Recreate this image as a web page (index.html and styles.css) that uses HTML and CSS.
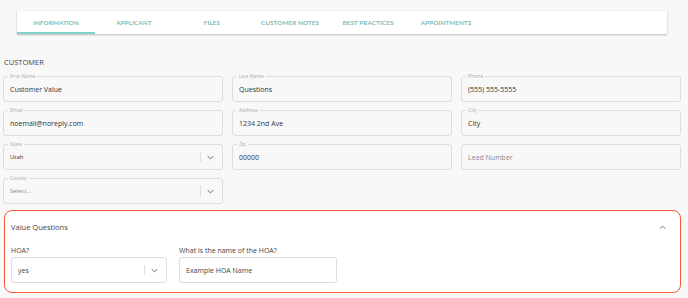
FILE: index.html
```html
<!DOCTYPE html>
<html lang="en">
<head>
    <meta charset="UTF-8">
    <meta name="viewport" content="width=device-width, initial-scale=1.0">
    <title>Customer</title>
    <link rel="stylesheet" href="styles.css">
</head>
<body>
    <nav class="tabs">
        <div class="tab active">Information</div>
        <div class="tab">Applicant</div>
        <div class="tab">Files</div>
        <div class="tab">Customer Notes</div>
        <div class="tab">Best Practices</div>
        <div class="tab">Appointments</div>
    </nav>

    <div class="content">
        <h3 class="section-title">CUSTOMER</h3>
        <div class="field-grid">
            <div class="field">
                <span class="field-label">First Name</span>
                <span class="field-value">Customer Value</span>
            </div>
            <div class="field">
                <span class="field-label">Last Name</span>
                <span class="field-value">Questions</span>
            </div>
            <div class="field">
                <span class="field-label">Phone</span>
                <span class="field-value">(555) 555-5555</span>
            </div>
            <div class="field">
                <span class="field-label">Email</span>
                <span class="field-value">noemail@noreply.com</span>
            </div>
            <div class="field">
                <span class="field-label">Address</span>
                <span class="field-value">1234 2nd Ave</span>
            </div>
            <div class="field">
                <span class="field-label">City</span>
                <span class="field-value">City</span>
            </div>
            <div class="field select">
                <span class="field-label">State</span>
                <span class="field-value small">Utah</span>
                <span class="sep"></span>
                <svg class="chevron" viewBox="0 0 10 6" width="7" height="5"><path d="M1 1l4 4 4-4" fill="none" stroke="#666" stroke-width="1.4"/></svg>
            </div>
            <div class="field">
                <span class="field-label">Zip</span>
                <span class="field-value">00000</span>
            </div>
            <div class="field">
                <span class="field-value placeholder">Lead Number</span>
            </div>
            <div class="field select">
                <span class="field-label">County</span>
                <span class="field-value small placeholder">Select...</span>
                <span class="sep"></span>
                <svg class="chevron" viewBox="0 0 10 6" width="7" height="5"><path d="M1 1l4 4 4-4" fill="none" stroke="#666" stroke-width="1.4"/></svg>
            </div>
        </div>

        <div class="panel">
            <div class="panel-header">
                <span>Value Questions</span>
                <svg class="chevron" viewBox="0 0 10 6" width="7" height="5"><path d="M1 5l4-4 4 4" fill="none" stroke="#777" stroke-width="1.4"/></svg>
            </div>
            <div class="panel-body">
                <div class="question">
                    <label>HOA?</label>
                    <div class="box select">
                        <span class="box-value small">yes</span>
                        <span class="sep"></span>
                        <svg class="chevron" viewBox="0 0 10 6" width="7" height="5"><path d="M1 1l4 4 4-4" fill="none" stroke="#666" stroke-width="1.4"/></svg>
                    </div>
                </div>
                <div class="question">
                    <label>What is the name of the HOA?</label>
                    <div class="box wide">
                        <span class="box-value">Example HOA Name</span>
                    </div>
                </div>
            </div>
        </div>
    </div>
</body>
</html>
```

FILE: styles.css
```css
body {
    margin: 0;
    padding: 0;
    background-color: #f8f8f8;
    font-family: "Open Sans", Arial, sans-serif;
    color: #333;
}

.tabs {
    display: flex;
    margin: 11px 21px 0 17px;
    height: 23px;
    background-color: #fff;
    box-shadow: 0px 1px 2px 0px rgba(0, 0, 0, 0.25);
}

.tab {
    width: 78px;
    box-sizing: border-box;
    text-align: center;
    line-height: 23px;
    font-family: Lato, sans-serif;
    font-weight: 700;
    font-size: 6.3px;
    letter-spacing: 0.1px;
    text-transform: uppercase;
    color: #80bcb5;
}

.tab.active {
    border-bottom: 2px solid #7fd0c6;
}

.content {
    padding: 0 7px 0 3px;
}

.section-title {
    margin: 23px 0 9px 1px;
    font-size: 7.5px;
    line-height: 10px;
    font-weight: 400;
    color: #444;
}

.field-grid {
    display: grid;
    grid-template-columns: repeat(3, 1fr);
    column-gap: 9px;
    row-gap: 8px;
}

.field {
    position: relative;
    display: flex;
    align-items: center;
    height: 26px;
    box-sizing: border-box;
    border: 1px solid #ddd;
    border-radius: 3px;
    padding: 0 6px;
}

.field-label {
    position: absolute;
    top: -4px;
    left: 4px;
    padding: 0 2px;
    background-color: #f8f8f8;
    font-size: 5px;
    line-height: 6px;
    color: #aaa;
}

.field-value {
    flex: 1;
    font-size: 7px;
    color: #333;
}

.small {
    font-size: 6px;
}

.placeholder {
    color: #888;
}

.sep {
    width: 1px;
    height: 10px;
    background-color: #ddd;
    margin-right: 6px;
}

.chevron {
    display: block;
    margin-right: 2px;
}

.panel {
    margin: 6px 0 0 1px;
    background-color: #fff;
    border: 1.5px solid #f15a3a;
    border-radius: 8px;
    padding: 0 12px 9px 6px;
}

.panel-header {
    display: flex;
    justify-content: space-between;
    align-items: center;
    padding-top: 11px;
    font-size: 7.5px;
    line-height: 10px;
    color: #444;
}

.panel-body {
    display: flex;
    gap: 12px;
    margin-top: 14px;
}

.question label {
    display: block;
    font-size: 7px;
    line-height: 10px;
    color: #444;
    margin-bottom: 1px;
}

.box {
    display: flex;
    align-items: center;
    width: 156px;
    height: 26px;
    box-sizing: border-box;
    border: 1px solid #ddd;
    border-radius: 3px;
    padding: 0 6px;
}

.box.wide {
    width: 158px;
}

.box-value {
    flex: 1;
    font-size: 7px;
    color: #444;
}
```
